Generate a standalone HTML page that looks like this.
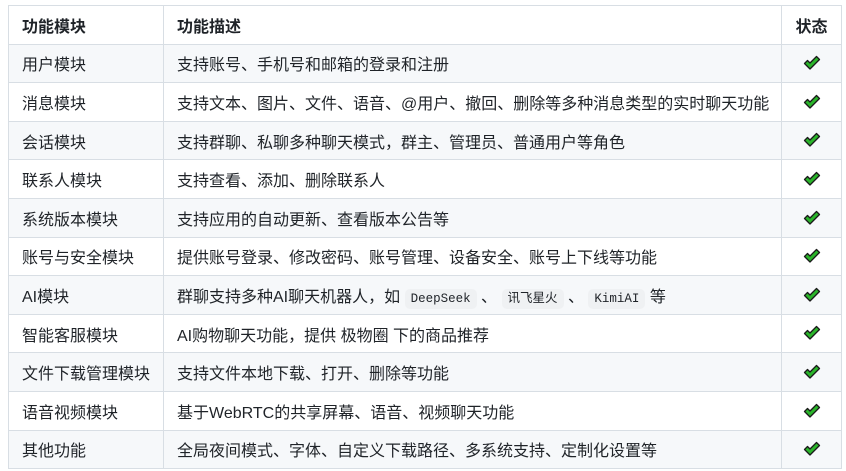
<!DOCTYPE html>
<html><head><meta charset="utf-8"><style>
html,body{margin:0;padding:0;background:#fff;}
body{width:846px;height:471px;overflow:hidden;font-family:"Liberation Sans","Noto Sans CJK SC",sans-serif;font-size:16px;color:#1f2328;}
table{position:absolute;left:8px;top:5px;border-collapse:collapse;width:833px;table-layout:fixed;}
td,th{border:1px solid #d8dee4;padding:0 13px;height:37.6px;text-align:left;white-space:nowrap;}
th{font-weight:bold;}
tr:nth-child(even) td{background:#f6f8fa;}
td:nth-child(3),th:nth-child(3){text-align:center;padding:0 6px;}
code{font-family:"Liberation Mono","Noto Sans CJK SC",monospace;font-size:12.5px;background:#eff1f3;border-radius:5px;padding:3px 6px;}
svg{vertical-align:middle}
</style></head><body>
<table>
<colgroup><col style="width:155px"><col style="width:618px"><col style="width:60px"></colgroup>
<tr><th>功能模块</th><th>功能描述</th><th>状态</th></tr>
<tr><td>用户模块</td><td>支持账号、手机号和邮箱的登录和注册</td><td><svg width="18" height="16" viewBox="0 0 18 16"><path d="M1.5 8.5 L4.5 5.5 L7 8 L13.5 1.5 L16.5 4.5 L7 14 Z" fill="#2ab52a" stroke="#1a1a1a" stroke-width="1.3" stroke-linejoin="round"/></svg></td></tr>
<tr><td>消息模块</td><td>支持文本、图片、文件、语音、@用户、撤回、删除等多种消息类型的实时聊天功能</td><td><svg width="18" height="16" viewBox="0 0 18 16"><path d="M1.5 8.5 L4.5 5.5 L7 8 L13.5 1.5 L16.5 4.5 L7 14 Z" fill="#2ab52a" stroke="#1a1a1a" stroke-width="1.3" stroke-linejoin="round"/></svg></td></tr>
<tr><td>会话模块</td><td>支持群聊、私聊多种聊天模式，群主、管理员、普通用户等角色</td><td><svg width="18" height="16" viewBox="0 0 18 16"><path d="M1.5 8.5 L4.5 5.5 L7 8 L13.5 1.5 L16.5 4.5 L7 14 Z" fill="#2ab52a" stroke="#1a1a1a" stroke-width="1.3" stroke-linejoin="round"/></svg></td></tr>
<tr><td>联系人模块</td><td>支持查看、添加、删除联系人</td><td><svg width="18" height="16" viewBox="0 0 18 16"><path d="M1.5 8.5 L4.5 5.5 L7 8 L13.5 1.5 L16.5 4.5 L7 14 Z" fill="#2ab52a" stroke="#1a1a1a" stroke-width="1.3" stroke-linejoin="round"/></svg></td></tr>
<tr><td>系统版本模块</td><td>支持应用的自动更新、查看版本公告等</td><td><svg width="18" height="16" viewBox="0 0 18 16"><path d="M1.5 8.5 L4.5 5.5 L7 8 L13.5 1.5 L16.5 4.5 L7 14 Z" fill="#2ab52a" stroke="#1a1a1a" stroke-width="1.3" stroke-linejoin="round"/></svg></td></tr>
<tr><td>账号与安全模块</td><td>提供账号登录、修改密码、账号管理、设备安全、账号上下线等功能</td><td><svg width="18" height="16" viewBox="0 0 18 16"><path d="M1.5 8.5 L4.5 5.5 L7 8 L13.5 1.5 L16.5 4.5 L7 14 Z" fill="#2ab52a" stroke="#1a1a1a" stroke-width="1.3" stroke-linejoin="round"/></svg></td></tr>
<tr><td>AI模块</td><td>群聊支持多种AI聊天机器人，如 <code>DeepSeek</code> 、 <code>讯飞星火</code> 、 <code>KimiAI</code> 等</td><td><svg width="18" height="16" viewBox="0 0 18 16"><path d="M1.5 8.5 L4.5 5.5 L7 8 L13.5 1.5 L16.5 4.5 L7 14 Z" fill="#2ab52a" stroke="#1a1a1a" stroke-width="1.3" stroke-linejoin="round"/></svg></td></tr>
<tr><td>智能客服模块</td><td>AI购物聊天功能，提供 极物圈 下的商品推荐</td><td><svg width="18" height="16" viewBox="0 0 18 16"><path d="M1.5 8.5 L4.5 5.5 L7 8 L13.5 1.5 L16.5 4.5 L7 14 Z" fill="#2ab52a" stroke="#1a1a1a" stroke-width="1.3" stroke-linejoin="round"/></svg></td></tr>
<tr><td>文件下载管理模块</td><td>支持文件本地下载、打开、删除等功能</td><td><svg width="18" height="16" viewBox="0 0 18 16"><path d="M1.5 8.5 L4.5 5.5 L7 8 L13.5 1.5 L16.5 4.5 L7 14 Z" fill="#2ab52a" stroke="#1a1a1a" stroke-width="1.3" stroke-linejoin="round"/></svg></td></tr>
<tr><td>语音视频模块</td><td>基于WebRTC的共享屏幕、语音、视频聊天功能</td><td><svg width="18" height="16" viewBox="0 0 18 16"><path d="M1.5 8.5 L4.5 5.5 L7 8 L13.5 1.5 L16.5 4.5 L7 14 Z" fill="#2ab52a" stroke="#1a1a1a" stroke-width="1.3" stroke-linejoin="round"/></svg></td></tr>
<tr><td>其他功能</td><td>全局夜间模式、字体、自定义下载路径、多系统支持、定制化设置等</td><td><svg width="18" height="16" viewBox="0 0 18 16"><path d="M1.5 8.5 L4.5 5.5 L7 8 L13.5 1.5 L16.5 4.5 L7 14 Z" fill="#2ab52a" stroke="#1a1a1a" stroke-width="1.3" stroke-linejoin="round"/></svg></td></tr>
</table>
</body></html>
